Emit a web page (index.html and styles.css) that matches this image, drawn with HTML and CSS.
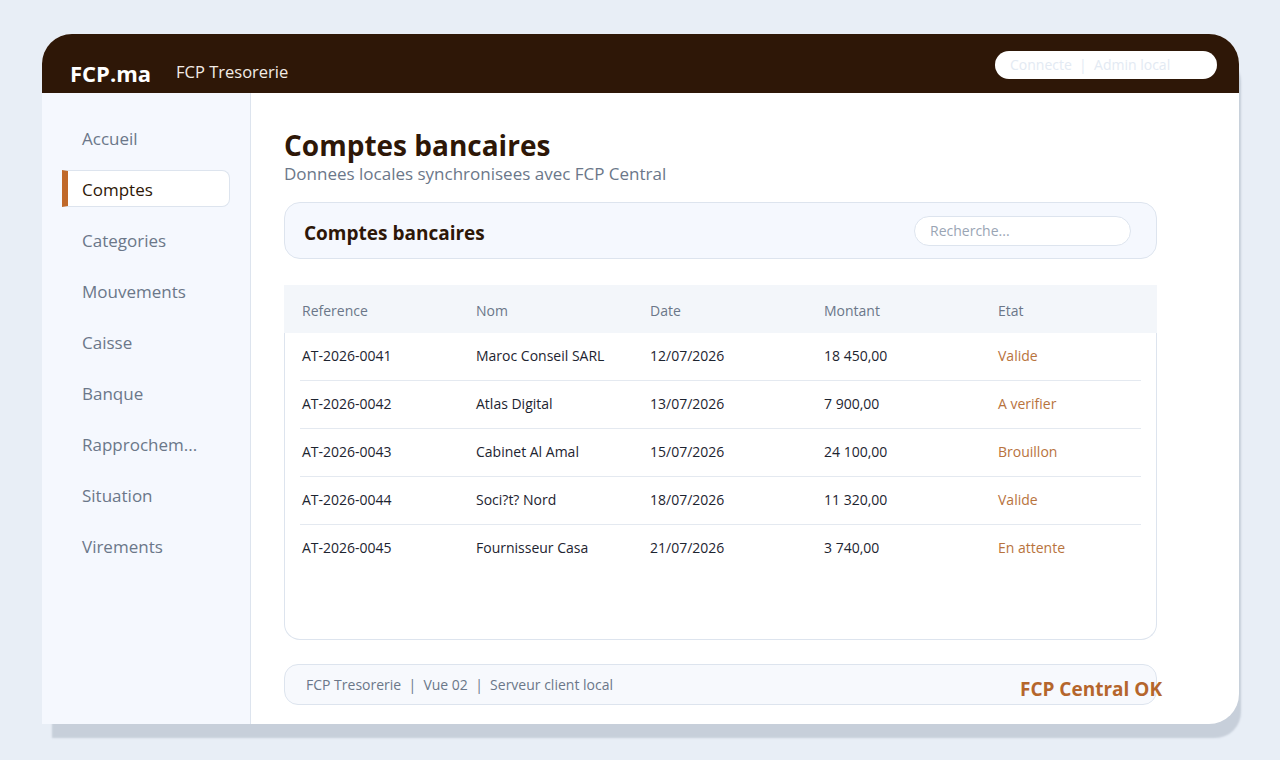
FILE: index.html
```html
<!DOCTYPE html>
<html lang="fr">
<head>
    <meta charset="UTF-8">
    <meta name="viewport" content="width=device-width, initial-scale=1.0">
    <title>FCP Tresorerie - Comptes bancaires</title>
    <link rel="stylesheet" href="styles.css">
</head>
<body>
    <div class="app-window">
        <header class="topbar">
            <div class="brand">
                <span class="brand-logo">FCP.ma</span>
                <span class="brand-app">FCP Tresorerie</span>
            </div>
            <div class="user-pill">Connecte &nbsp;|&nbsp; Admin local</div>
        </header>

        <div class="layout">
            <nav class="sidebar">
                <a class="nav-item">Accueil</a>
                <a class="nav-item active">Comptes</a>
                <a class="nav-item">Categories</a>
                <a class="nav-item">Mouvements</a>
                <a class="nav-item">Caisse</a>
                <a class="nav-item">Banque</a>
                <a class="nav-item">Rapprochem...</a>
                <a class="nav-item">Situation</a>
                <a class="nav-item">Virements</a>
            </nav>

            <main class="content">
                <h1 class="page-title">Comptes bancaires</h1>
                <p class="page-subtitle">Donnees locales synchronisees avec FCP Central</p>

                <div class="card-header">
                    <h2>Comptes bancaires</h2>
                    <input type="text" class="search" placeholder="Recherche...">
                </div>

                <!-- Liste des comptes -->
                <div class="data-table">
                    <div class="table-head">
                        <span>Reference</span>
                        <span>Nom</span>
                        <span>Date</span>
                        <span>Montant</span>
                        <span>Etat</span>
                    </div>
                    <div class="table-body">
                        <div class="table-row">
                            <span>AT-2026-0041</span>
                            <span>Maroc Conseil SARL</span>
                            <span>12/07/2026</span>
                            <span>18 450,00</span>
                            <span class="state">Valide</span>
                        </div>
                        <div class="table-row">
                            <span>AT-2026-0042</span>
                            <span>Atlas Digital</span>
                            <span>13/07/2026</span>
                            <span>7 900,00</span>
                            <span class="state">A verifier</span>
                        </div>
                        <div class="table-row">
                            <span>AT-2026-0043</span>
                            <span>Cabinet Al Amal</span>
                            <span>15/07/2026</span>
                            <span>24 100,00</span>
                            <span class="state">Brouillon</span>
                        </div>
                        <div class="table-row">
                            <span>AT-2026-0044</span>
                            <span>Soci?t? Nord</span>
                            <span>18/07/2026</span>
                            <span>11 320,00</span>
                            <span class="state">Valide</span>
                        </div>
                        <div class="table-row">
                            <span>AT-2026-0045</span>
                            <span>Fournisseur Casa</span>
                            <span>21/07/2026</span>
                            <span>3 740,00</span>
                            <span class="state">En attente</span>
                        </div>
                    </div>
                </div>

                <footer class="status-bar">
                    <span>FCP Tresorerie &nbsp;|&nbsp; Vue 02 &nbsp;|&nbsp; Serveur client local</span>
                    <strong class="status-ok">FCP Central OK</strong>
                </footer>
            </main>
        </div>
    </div>
</body>
</html>
```

FILE: styles.css
```css
* {
    margin: 0;
    padding: 0;
    box-sizing: border-box;
    font-family: 'Segoe UI', 'Open Sans', sans-serif;
}

body {
    background-color: #e8eef6;
    height: 760px;
    overflow: hidden;
}

.app-window {
    width: 1197px;
    height: 690px;
    margin: 34px 0 0 42px;
    border-radius: 30px 30px 30px 0;
    overflow: hidden;
    background: #ffffff;
    box-shadow: 6px 18px 2px -4px #c7cfda;
    display: flex;
    flex-direction: column;
}

/* Barre du haut */
.topbar {
    height: 59px;
    background-color: #2e1707;
    display: flex;
    justify-content: space-between;
    align-items: center;
    padding: 0 22px 0 28px;
    flex-shrink: 0;
}

.brand {
    display: flex;
    align-items: center;
    gap: 25px;
    padding-top: 19px;
}

.brand-logo {
    color: #ffffff;
    font-size: 22px;
    font-weight: 700;
}

.brand-app {
    color: #f3ece6;
    font-size: 16.5px;
    margin-bottom: 3px;
}

.user-pill {
    background: #ffffff;
    border-radius: 14px;
    width: 222px;
    height: 28px;
    padding: 0 15px;
    display: flex;
    align-items: center;
    color: #e3eaf3;
    font-size: 14px;
    margin-top: 2px;
}

.layout {
    flex: 1;
    display: flex;
    min-height: 0;
}

/* Menu lateral */
.sidebar {
    width: 209px;
    background-color: #f5f8fe;
    border-right: 1px solid #dde4ee;
    padding: 27px 20px 0;
    display: flex;
    flex-direction: column;
    gap: 14px;
    flex-shrink: 0;
}

.nav-item {
    height: 37px;
    display: flex;
    align-items: center;
    padding-left: 19px;
    border: 1px solid transparent;
    border-radius: 8px;
    color: #6b7789;
    font-size: 17px;
    white-space: nowrap;
    cursor: pointer;
}

.nav-item.active {
    background: #ffffff;
    border-color: #dde4ee;
    border-left: 6px solid #c0692a;
    border-radius: 0 8px 8px 0;
    margin: -1px 0 1px;
    padding-left: 14px;
    padding-top: 2px;
    color: #2e1707;
}

/* Contenu */
.content {
    flex: 1;
    min-width: 0;
    padding: 34px 82px 19px 33px;
    display: flex;
    flex-direction: column;
}

.page-title {
    color: #2e1707;
    font-size: 28px;
    font-weight: 700;
    line-height: 36px;
}

.page-subtitle {
    color: #6b7789;
    font-size: 17px;
    line-height: 22px;
}

.card-header {
    margin-top: 17px;
    height: 57px;
    background-color: #f5f8fe;
    border: 1px solid #dde4ee;
    border-radius: 16px;
    display: flex;
    justify-content: space-between;
    align-items: center;
    padding: 0 25px 0 19px;
}

.card-header h2 {
    color: #2e1707;
    font-size: 19px;
    font-weight: 700;
    padding-top: 5px;
}

.search {
    width: 217px;
    height: 30px;
    border: 1px solid #dde4ee;
    border-radius: 15px;
    background: #ffffff;
    padding: 0 15px;
    font-size: 14px;
    color: #333;
    outline: none;
}

.search::placeholder {
    color: #9aa5b4;
}

.data-table {
    margin-top: 26px;
    height: 355px;
    display: flex;
    flex-direction: column;
}

.table-head,
.table-row {
    display: grid;
    grid-template-columns: 174px 174px 174px 174px 1fr;
    align-items: center;
    font-size: 14px;
}

.table-head {
    height: 48px;
    background-color: #f3f6fa;
    padding: 3px 18px 0;
    color: #6b7789;
}

.table-body {
    flex: 1;
    border: 1px solid #dde4ee;
    border-top: none;
    border-radius: 0 0 16px 16px;
    padding: 0 15px;
}

.table-row {
    height: 48px;
    padding: 0 2px 3px;
    border-bottom: 1px solid #e4e9f0;
    color: #1d2430;
}

.table-row:last-child {
    border-bottom: none;
}

.state {
    color: #b8733d;
}

.status-bar {
    margin-top: 24px;
    height: 41px;
    background-color: #f7f9fd;
    border: 1px solid #dde4ee;
    border-radius: 14px;
    display: flex;
    justify-content: space-between;
    align-items: center;
    padding: 0 0 0 21px;
    color: #6b7789;
    font-size: 14px;
}

.status-ok {
    color: #b5662c;
    font-size: 19px;
    font-weight: 700;
    margin-right: -6px;
    padding-top: 9px;
}
```
